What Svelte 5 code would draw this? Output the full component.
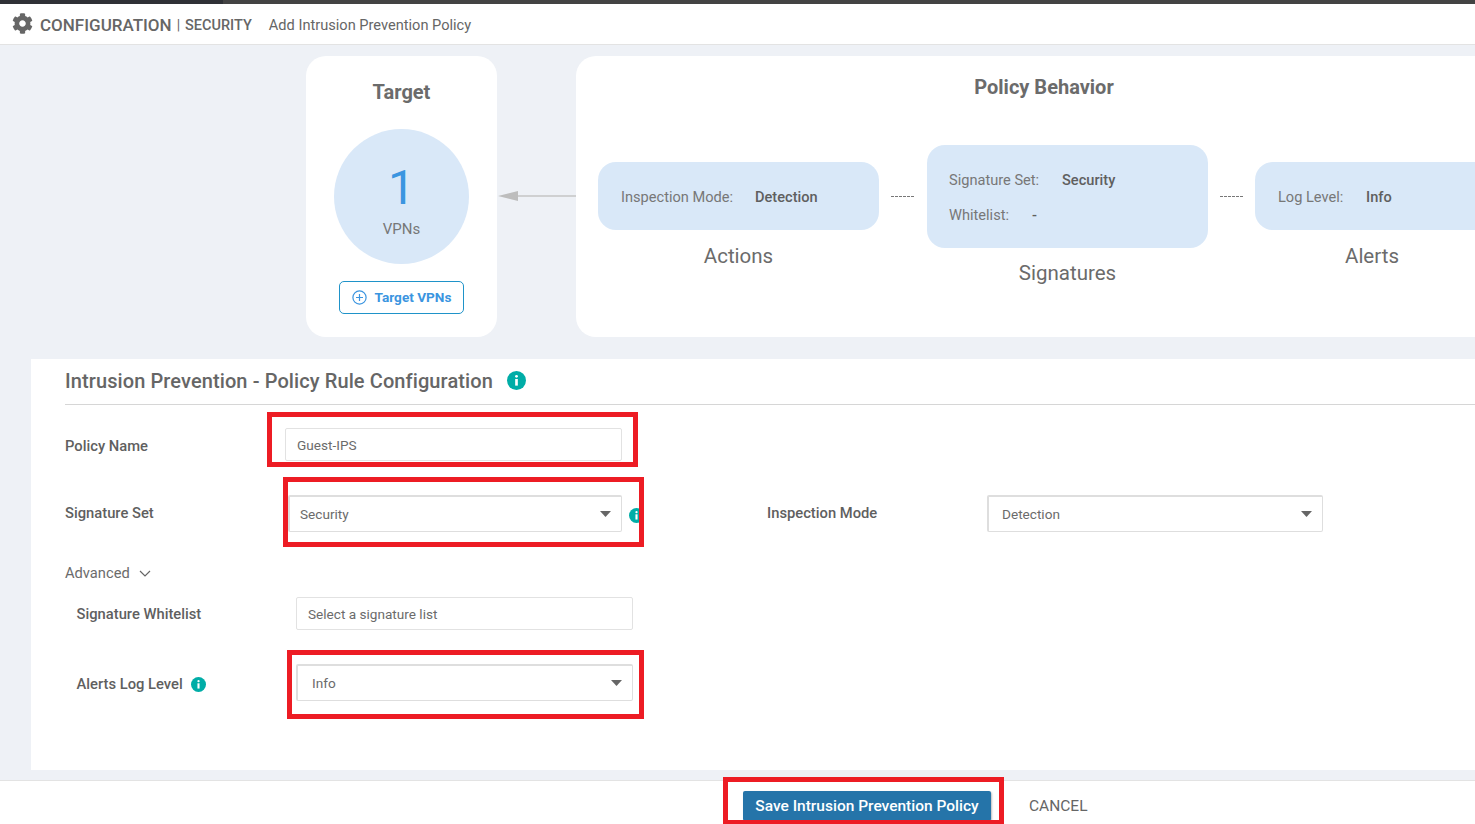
<script>
  const gear = "M487.4 315.7l-42.6-24.6c4.3-23.2 4.3-47 0-70.2l42.6-24.6c4.9-2.8 7.1-8.6 5.5-14-11.1-35.6-30-67.8-54.7-94.6-3.8-4.1-10-5.1-14.8-2.3L380.8 110c-17.9-15.4-38.5-27.3-60.8-35.1V25.8c0-5.6-3.9-10.5-9.4-11.7-36.7-8.2-74.3-7.8-109.2 0-5.5 1.2-9.4 6.1-9.4 11.7V75c-22.2 7.9-42.8 19.8-60.8 35.1L88.7 85.5c-4.9-2.8-11-1.9-14.8 2.3-24.7 26.7-43.6 58.9-54.7 94.6-1.7 5.4.6 11.2 5.5 14L67.3 221c-4.3 23.2-4.3 47 0 70.2l-42.6 24.6c-4.9 2.8-7.1 8.6-5.5 14 11.1 35.6 30 67.8 54.7 94.6 3.8 4.1 10 5.1 14.8 2.3l42.6-24.6c17.9 15.4 38.5 27.3 60.8 35.1v49.2c0 5.6 3.9 10.5 9.4 11.7 36.7 8.2 74.3 7.8 109.2 0 5.5-1.2 9.4-6.1 9.4-11.7v-49.2c22.2-7.9 42.8-19.8 60.8-35.1l42.6 24.6c4.9 2.8 11 1.9 14.8-2.3 24.7-26.7 43.6-58.9 54.7-94.6 1.5-5.5-.7-11.3-5.6-14.1zM256 336c-44.1 0-80-35.9-80-80s35.9-80 80-80 80 35.9 80 80-35.9 80-80 80z";
</script>

{#snippet info(size)}
  <svg class="info" width={size} height={size} viewBox="0 0 20 20">
    <circle cx="10" cy="10" r="10" fill="#00ada7" />
    <circle cx="10" cy="5.6" r="1.5" fill="#fff" />
    <rect x="8.6" y="8.4" width="2.8" height="7" fill="#fff" />
  </svg>
{/snippet}

{#snippet caret()}
  <svg class="caret" width="11" height="6" viewBox="0 0 11 6"><path d="M0 0h11L5.5 6z" fill="#666" /></svg>
{/snippet}

<div class="page">
  <div class="topbar"></div>
  <header class="header">
    <svg class="gear" width="21" height="21" viewBox="0 0 512 512"><path d={gear} fill="#666" /></svg>
    <span class="crumb-main">CONFIGURATION</span>
    <span class="crumb-sep">|</span>
    <span class="crumb-sub">SECURITY</span>
    <span class="crumb-page">Add Intrusion Prevention Policy</span>
  </header>

  <main class="main">
    <section class="overview">
      <div class="card target">
        <h3 class="card-title">Target</h3>
        <div class="circle">
          <span class="count">1</span>
          <span class="count-label">VPNs</span>
        </div>
        <button class="target-btn">
          <svg width="15" height="15" viewBox="0 0 15 15" fill="none" stroke="#3b95e0" stroke-width="1.2">
            <circle cx="7.5" cy="7.5" r="6.6" />
            <path d="M7.5 4v7M4 7.5h7" />
          </svg>
          Target VPNs
        </button>
      </div>

      <div class="arrow">
        <svg width="79" height="12" viewBox="0 0 79 12">
          <path d="M20 6h59" stroke="#c4c4c4" stroke-width="1.6" />
          <path d="M1 6l20-5v10z" fill="#bdbdbd" />
        </svg>
      </div>

      <div class="card behavior">
        <h3 class="card-title">Policy Behavior</h3>
        <div class="flow">
          <div class="step">
            <div class="pill">
              <div class="pill-row"><span class="k k-action">Inspection Mode:</span><b>Detection</b></div>
            </div>
            <div class="step-name">Actions</div>
          </div>
          <span class="dash"></span>
          <div class="step">
            <div class="pill pill-tall">
              <div class="pill-row"><span class="k k-sig">Signature Set:</span><b>Security</b></div>
              <div class="pill-row"><span class="k k-white">Whitelist:</span><b>-</b></div>
            </div>
            <div class="step-name sig-name">Signatures</div>
          </div>
          <span class="dash dash-last"></span>
          <div class="step">
            <div class="pill">
              <div class="pill-row"><span class="k k-log">Log Level:</span><b>Info</b></div>
            </div>
            <div class="step-name alerts-name">Alerts</div>
          </div>
        </div>
      </div>
    </section>

    <section class="config">
      <div class="config-head">
        <h2>Intrusion Prevention - Policy Rule Configuration</h2>
        {@render info(19)}
      </div>

      <div class="row row-name">
        <label class="lbl">Policy Name</label>
        <div class="input name-input">Guest-IPS</div>
      </div>

      <div class="row row-sig">
        <label class="lbl">Signature Set</label>
        <div class="select sig-select">Security {@render caret()}</div>
        <span class="sig-info">{@render info(15)}</span>
        <label class="lbl mode-lbl">Inspection Mode</label>
        <div class="select mode-select">Detection {@render caret()}</div>
      </div>

      <div class="advanced">
        Advanced
        <svg width="12" height="7" viewBox="0 0 12 7" fill="none" stroke="#666" stroke-width="1.2"><path d="M1 1l5 5 5-5" /></svg>
      </div>

      <div class="row row-white">
        <label class="lbl sub-lbl">Signature Whitelist</label>
        <div class="input white-input">Select a signature list</div>
      </div>

      <div class="row row-log">
        <label class="lbl sub-lbl log-lbl">Alerts Log Level {@render info(15)}</label>
        <div class="select log-select">Info {@render caret()}</div>
      </div>
    </section>
  </main>

  <footer class="footer">
    <button class="save">Save Intrusion Prevention Policy</button>
    <button class="cancel">CANCEL</button>
  </footer>

  <!-- annotation boxes drawn over the screenshot -->
  <div class="mark mark-name"></div>
  <div class="mark mark-sig"></div>
  <div class="mark mark-log"></div>
  <div class="mark mark-save"></div>
</div>

<style>
  :global(body) {
    margin: 0;
    overflow: hidden;
  }
  .page {
    position: relative;
    width: 1475px;
    height: 824px;
    overflow: hidden;
    display: flex;
    flex-direction: column;
    background: #eef1f6;
    color: #666;
    font-family: Roboto, "Liberation Sans", sans-serif;
    font-size: 14px;
  }
  .topbar {
    height: 4px;
    background: linear-gradient(90deg, #2f3136 0 223px, #434343 223px);
    flex: none;
  }
  .header {
    height: 41px;
    flex: none;
    box-sizing: border-box;
    background: #fff;
    border-bottom: 1px solid #e3e3e3;
    display: flex;
    align-items: center;
    padding: 2px 0 0 12px;
  }
  .gear {
    margin-right: 7px;
    margin-top: -4px;
  }
  .crumb-main {
    font-size: 17px;
    font-weight: 500;
  }
  .crumb-sep {
    margin: 0 5px 0 5px;
    font-size: 14px;
  }
  .crumb-sub {
    font-size: 14.5px;
    font-weight: 500;
    margin-right: 17px;
  }
  .crumb-page {
    font-size: 14.6px;
  }
  .main {
    flex: none;
    height: 735px;
    padding-top: 11px;
    box-sizing: border-box;
    overflow: hidden;
  }
  .overview {
    display: flex;
    padding-left: 306px;
    height: 281px;
    width: 1300px;
  }
  .card {
    background: #fff;
    border-radius: 20px;
    flex: none;
    box-sizing: border-box;
  }
  .card-title {
    margin: 0;
    font-size: 20px;
    font-weight: 700;
    line-height: 24px;
    text-align: center;
    color: #6b6b6b;
  }
  .target {
    width: 191px;
    padding-top: 24px;
    display: flex;
    flex-direction: column;
    align-items: center;
  }
  .circle {
    width: 135px;
    height: 135px;
    margin-top: 25px;
    border-radius: 50%;
    background: #d9e8f8;
    display: flex;
    flex-direction: column;
    align-items: center;
  }
  .count {
    font-size: 48px;
    font-weight: 400;
    line-height: 56px;
    margin-top: 31px;
    color: #3b95e0;
  }
  .count-label {
    font-size: 15px;
    line-height: 18px;
    margin-top: 4px;
    color: #777;
  }
  .target-btn {
    margin-top: 17px;
    width: 125px;
    height: 33px;
    box-sizing: border-box;
    background: #fff;
    border: 1px solid #1f93c9;
    border-radius: 5px;
    color: #3b95e0;
    font: 700 13.6px Roboto, sans-serif;
    display: flex;
    align-items: center;
    justify-content: center;
    gap: 8px;
    padding: 0 0 1px;
  }
  .arrow {
    width: 79px;
    flex: none;
    display: flex;
    align-items: center;
    height: 280px;
  }
  .arrow svg {
    display: block;
  }
  .behavior {
    width: 936px;
    padding-top: 19px;
  }
  .flow {
    display: flex;
    align-items: flex-start;
    padding: 0 0 0 22px;
    margin-top: 46px;
  }
  .step {
    width: 281px;
    flex: none;
    text-align: center;
  }
  .pill {
    height: 68px;
    margin-top: 17px;
    border-radius: 18px;
    background: #d9e8f8;
    display: flex;
    flex-direction: column;
    justify-content: center;
    text-align: left;
    box-sizing: border-box;
    padding: 2px 0 0 23px;
  }
  .pill-tall {
    height: 103px;
    margin-top: 0;
    gap: 17px;
    padding-left: 22px;
  }
  .pill-row {
    display: flex;
    line-height: 18px;
    font-size: 14.6px;
  }
  .pill-row b {
    font-weight: 500;
    font-size: 14.6px;
    color: #5f5f5f;
  }
  .k {
    color: #777;
    flex: none;
  }
  .k-action {
    width: 134px;
  }
  .k-sig {
    width: 113px;
  }
  .k-white {
    width: 83px;
  }
  .k-log {
    width: 88px;
  }
  .step-name {
    margin-top: 14px;
    font-size: 20.5px;
    line-height: 24px;
    color: #6b6b6b;
  }
  .sig-name {
    margin-top: 13px;
  }
  .alerts-name {
    width: 234px;
  }
  .dash {
    flex: none;
    width: 24px;
    height: 1px;
    margin: 51px 12px 0;
    background: repeating-linear-gradient(90deg, #777 0 3px, transparent 3px 4px);
  }
  .dash-last {
    margin-right: 11px;
  }
  .config {
    margin: 22px 0 0 31px;
    height: 411px;
    box-sizing: border-box;
    background: #fff;
    padding-left: 34px;
  }
  .config-head {
    height: 46px;
    box-sizing: border-box;
    border-bottom: 1px solid #d6d6d6;
    display: flex;
    align-items: center;
    gap: 14px;
    padding-bottom: 2px;
  }
  .config-head h2 {
    margin: 0;
    font-size: 20px;
    font-weight: 500;
    letter-spacing: 0.1px;
    color: #666;
  }
  .info {
    display: block;
    flex: none;
  }
  .row {
    display: flex;
    align-items: center;
  }
  .lbl {
    font-weight: 500;
    font-size: 14.75px;
    color: #5f5f5f;
    flex: none;
  }
  .row-name {
    margin-top: 23px;
  }
  .row-name .lbl {
    width: 220px;
    padding-top: 3px;
  }
  .input {
    height: 33px;
    box-sizing: border-box;
    border: 1px solid #e2e2e2;
    border-radius: 2px;
    padding: 1px 0 0 11px;
    display: flex;
    align-items: center;
    font-size: 13.6px;
    color: #6b6b6b;
  }
  .name-input {
    width: 337px;
  }
  .row-sig {
    margin-top: 34px;
  }
  .row-sig > .lbl:first-child {
    width: 223px;
    padding-bottom: 1px;
  }
  .select {
    height: 37px;
    box-sizing: border-box;
    border: 1px solid #dedede;
    border-top-width: 2px;
    border-left-width: 2px;
    border-radius: 2px;
    padding: 0 10px 0 13px;
    display: flex;
    align-items: center;
    justify-content: space-between;
    font-size: 13.6px;
    color: #6b6b6b;
  }
  .sig-select {
    width: 334px;
    padding-left: 10px;
  }
  .sig-info {
    margin: 4px 0 0 7px;
  }
  .mode-lbl {
    margin-left: 123px;
    width: 220px;
    padding-bottom: 1px;
  }
  .mode-select {
    width: 336px;
  }
  .advanced {
    margin-top: 32px;
    display: flex;
    align-items: center;
    gap: 9px;
    font-size: 14.7px;
    line-height: 18px;
    color: #6b6b6b;
  }
  .row-white {
    margin-top: 15px;
  }
  .sub-lbl {
    margin-left: 11.5px;
    width: 219.5px;
  }
  .white-input {
    width: 337px;
    padding-left: 11px;
  }
  .row-log {
    margin-top: 34px;
  }
  .log-lbl {
    display: flex;
    align-items: center;
    gap: 8px;
    padding-top: 3px;
  }
  .log-select {
    width: 337px;
    padding-left: 14px;
  }
  .footer {
    position: absolute;
    left: 0;
    right: 0;
    top: 780px;
    height: 44px;
    box-sizing: border-box;
    background: #fff;
    border-top: 1px solid #e3e3e3;
    display: flex;
    align-items: center;
    padding-left: 743px;
  }
  .save {
    width: 248px;
    height: 30px;
    margin-top: 6px;
    background: #2574a9;
    border: 0;
    border-radius: 2px;
    color: #fff;
    font: 500 15.5px Roboto, sans-serif;
    padding: 0;
    box-shadow: 1px 1px 2px rgba(0, 0, 0, 0.25);
  }
  .cancel {
    margin: 6px 0 0 38px;
    background: none;
    border: 0;
    padding: 0;
    color: #666;
    font: 400 15.5px Roboto, sans-serif;
  }
  .mark {
    position: absolute;
    box-sizing: border-box;
    border: 5px solid #ed1c24;
  }
  .mark-name {
    left: 267px;
    top: 412px;
    width: 371px;
    height: 55px;
  }
  .mark-sig {
    left: 283px;
    top: 477px;
    width: 361px;
    height: 70px;
  }
  .mark-log {
    left: 287px;
    top: 650px;
    width: 357px;
    height: 69px;
  }
  .mark-save {
    left: 723px;
    top: 777px;
    width: 281px;
    height: 48px;
  }
</style>
